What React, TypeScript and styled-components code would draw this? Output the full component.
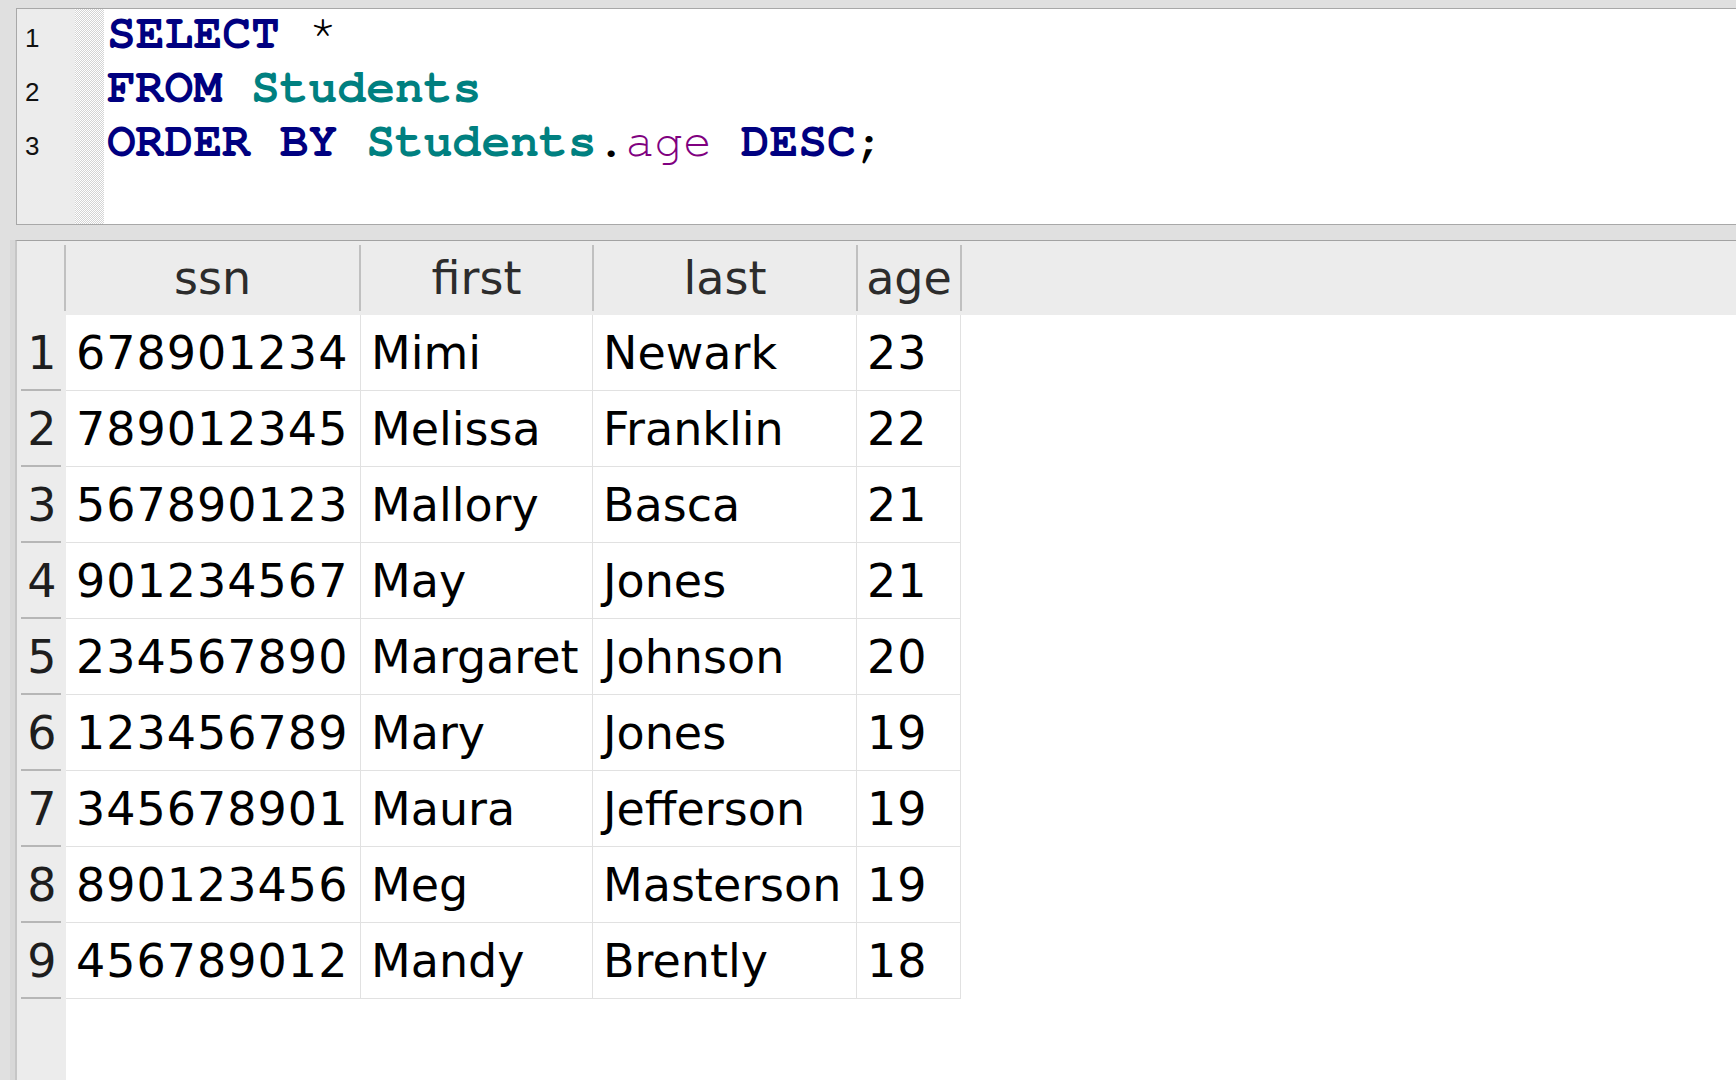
import React from "react";
import styled, { createGlobalStyle } from "styled-components";

const Global = createGlobalStyle`
  html, body { margin: 0; padding: 0; height: 100%; }
  body { background: #e0e0e0; overflow: hidden; }
  #root { height: 100%; }
`;

const Window = styled.div`
  height: 100vh;
  box-sizing: border-box;
  padding-top: 8px;
  display: flex;
  flex-direction: column;
  background: #e0e0e0;
`;

const Editor = styled.div`
  margin-left: 16px;
  height: 217px;
  box-sizing: border-box;
  border: 1px solid #a8a8a8;
  border-right: none;
  background: #fff;
  display: flex;
  flex-shrink: 0;
  overflow: hidden;
`;

const Gutter = styled.div`
  width: 58px;
  flex-shrink: 0;
  box-sizing: border-box;
  padding: 2px 0 0 8px;
  background: #ececec;
  font-family: "Liberation Sans", Arial, sans-serif;
  font-size: 26px;
  line-height: 54px;
  color: #111;
`;

const Strip = styled.div`
  width: 29px;
  flex-shrink: 0;
  background-color: #f2f2f2;
  background-image: conic-gradient(#d4d4d4 25%, #ffffff 0 50%, #d4d4d4 0 75%, #ffffff 0);
  background-size: 2px 2px;
`;

const Code = styled.pre`
  margin: -2px 0 0 0;
  padding: 0 0 0 3px;
  font-family: "Nimbus Mono PS", "Nimbus Mono L", "FreeMono", "Courier New", "Liberation Mono", monospace;
  font-size: 48px;
  line-height: 54px;
  color: #000;
`;

type Kind = "kw" | "tbl" | "col" | "plain";

const Tok = styled.span<{ $kind: Kind }>`
  color: ${(p) =>
    p.$kind === "kw" ? "#000080" : p.$kind === "tbl" ? "#008080" : p.$kind === "col" ? "#800080" : "#000"};
  font-weight: ${(p) => (p.$kind === "kw" || p.$kind === "tbl" ? 700 : 400)};
`;

const TablePanel = styled.div`
  flex: 1;
  min-height: 0;
  margin-top: 15px;
  margin-left: 10px;
  border-left: 5px solid #d8d8d8;
  display: flex;
  flex-direction: column;
`;

const Grid = styled.div`
  flex: 1;
  display: flex;
  flex-direction: column;
  border-left: 2px solid #c6c6c6;
  border-top: 1px solid #a2a2a2;
  background: #fff;
`;

const HeaderBar = styled.div`
  height: 74px;
  flex-shrink: 0;
  display: flex;
  background: #ececec;
`;

const HeaderCorner = styled.div`
  width: 47px;
  flex-shrink: 0;
`;

const HeaderCell = styled.div<{ $w: number }>`
  width: ${(p) => p.$w}px;
  flex-shrink: 0;
  box-sizing: border-box;
  padding: 4px 0;
  display: flex;
`;

const HeaderLabel = styled.div`
  flex: 1;
  border-left: 2px solid #c0c0c0;
  display: flex;
  align-items: center;
  justify-content: center;
  padding-top: 0;
  font-family: "Lucida Grande", "DejaVu Sans", sans-serif;
  font-size: 46px;
  color: #2c2c2c;
  white-space: nowrap;
`;

const Row = styled.div`
  height: 76px;
  flex-shrink: 0;
  display: flex;
`;

const RowNum = styled.div`
  width: 49px;
  flex-shrink: 0;
  box-sizing: border-box;
  padding: 0 5px 0 4px;
  background: #ececec;
  display: flex;
`;

const RowNumLabel = styled.div`
  flex: 1;
  border-bottom: 2px solid #b6b6b6;
  display: flex;
  align-items: center;
  justify-content: center;
  padding: 2px 0 0 2px;
  font-family: "Lucida Grande", "DejaVu Sans", sans-serif;
  font-size: 46px;
  color: #1e1e1e;
`;

const Cell = styled.div<{ $w: number; $numeric?: boolean }>`
  width: ${(p) => p.$w}px;
  flex-shrink: 0;
  box-sizing: border-box;
  padding-left: 10px;
  padding-top: 1px;
  border-right: 1px solid #e1e1e1;
  border-bottom: 1px solid #e1e1e1;
  display: flex;
  align-items: center;
  overflow: hidden;
  white-space: nowrap;
  font-family: "Lucida Grande", "DejaVu Sans", sans-serif;
  font-size: 46px;
  letter-spacing: ${(p) => (p.$numeric ? "1px" : "0")};
  color: #000;
`;

const Filler = styled.div`
  flex: 1;
  display: flex;
`;

const RowNumStub = styled.div`
  width: 49px;
  background: #ececec;
`;

const headerCols = [
  { name: "ssn", w: 295 },
  { name: "first", w: 233 },
  { name: "last", w: 264 },
  { name: "age", w: 104 },
];

const bodyCols = [
  { w: 295, numeric: true },
  { w: 232, numeric: false },
  { w: 264, numeric: false },
  { w: 104, numeric: true },
];

const rows: [string, string, string, string][] = [
  ["678901234", "Mimi", "Newark", "23"],
  ["789012345", "Melissa", "Franklin", "22"],
  ["567890123", "Mallory", "Basca", "21"],
  ["901234567", "May", "Jones", "21"],
  ["234567890", "Margaret", "Johnson", "20"],
  ["123456789", "Mary", "Jones", "19"],
  ["345678901", "Maura", "Jefferson", "19"],
  ["890123456", "Meg", "Masterson", "19"],
  ["456789012", "Mandy", "Brently", "18"],
];

const codeLines: [Kind, string][][] = [
  [["kw", "SELECT"], ["plain", " *"]],
  [["kw", "FROM"], ["plain", " "], ["tbl", "Students"]],
  [
    ["kw", "ORDER BY"],
    ["plain", " "],
    ["tbl", "Students"],
    ["plain", "."],
    ["col", "age"],
    ["plain", " "],
    ["kw", "DESC"],
    ["plain", ";"],
  ],
];

export default function App() {
  return (
    <>
      <Global />
      <Window>
        <Editor>
          <Gutter>
            {codeLines.map((_, i) => (
              <div key={i}>{i + 1}</div>
            ))}
          </Gutter>
          <Strip />
          <Code>
            {codeLines.map((line, i) => (
              <div key={i}>
                {line.map(([k, t], j) => (
                  <Tok key={j} $kind={k}>
                    {t}
                  </Tok>
                ))}
              </div>
            ))}
          </Code>
        </Editor>
        <TablePanel>
          <Grid>
            <HeaderBar>
              <HeaderCorner />
              {headerCols.map((c) => (
                <HeaderCell key={c.name} $w={c.w}>
                  <HeaderLabel>{c.name}</HeaderLabel>
                </HeaderCell>
              ))}
              <HeaderCell $w={4}>
                <HeaderLabel />
              </HeaderCell>
            </HeaderBar>
            {rows.map((r, i) => (
              <Row key={i}>
                <RowNum>
                  <RowNumLabel>{i + 1}</RowNumLabel>
                </RowNum>
                {r.map((v, j) => (
                  <Cell key={j} $w={bodyCols[j].w} $numeric={bodyCols[j].numeric}>
                    {v}
                  </Cell>
                ))}
              </Row>
            ))}
            <Filler>
              <RowNumStub />
            </Filler>
          </Grid>
        </TablePanel>
      </Window>
    </>
  );
}
